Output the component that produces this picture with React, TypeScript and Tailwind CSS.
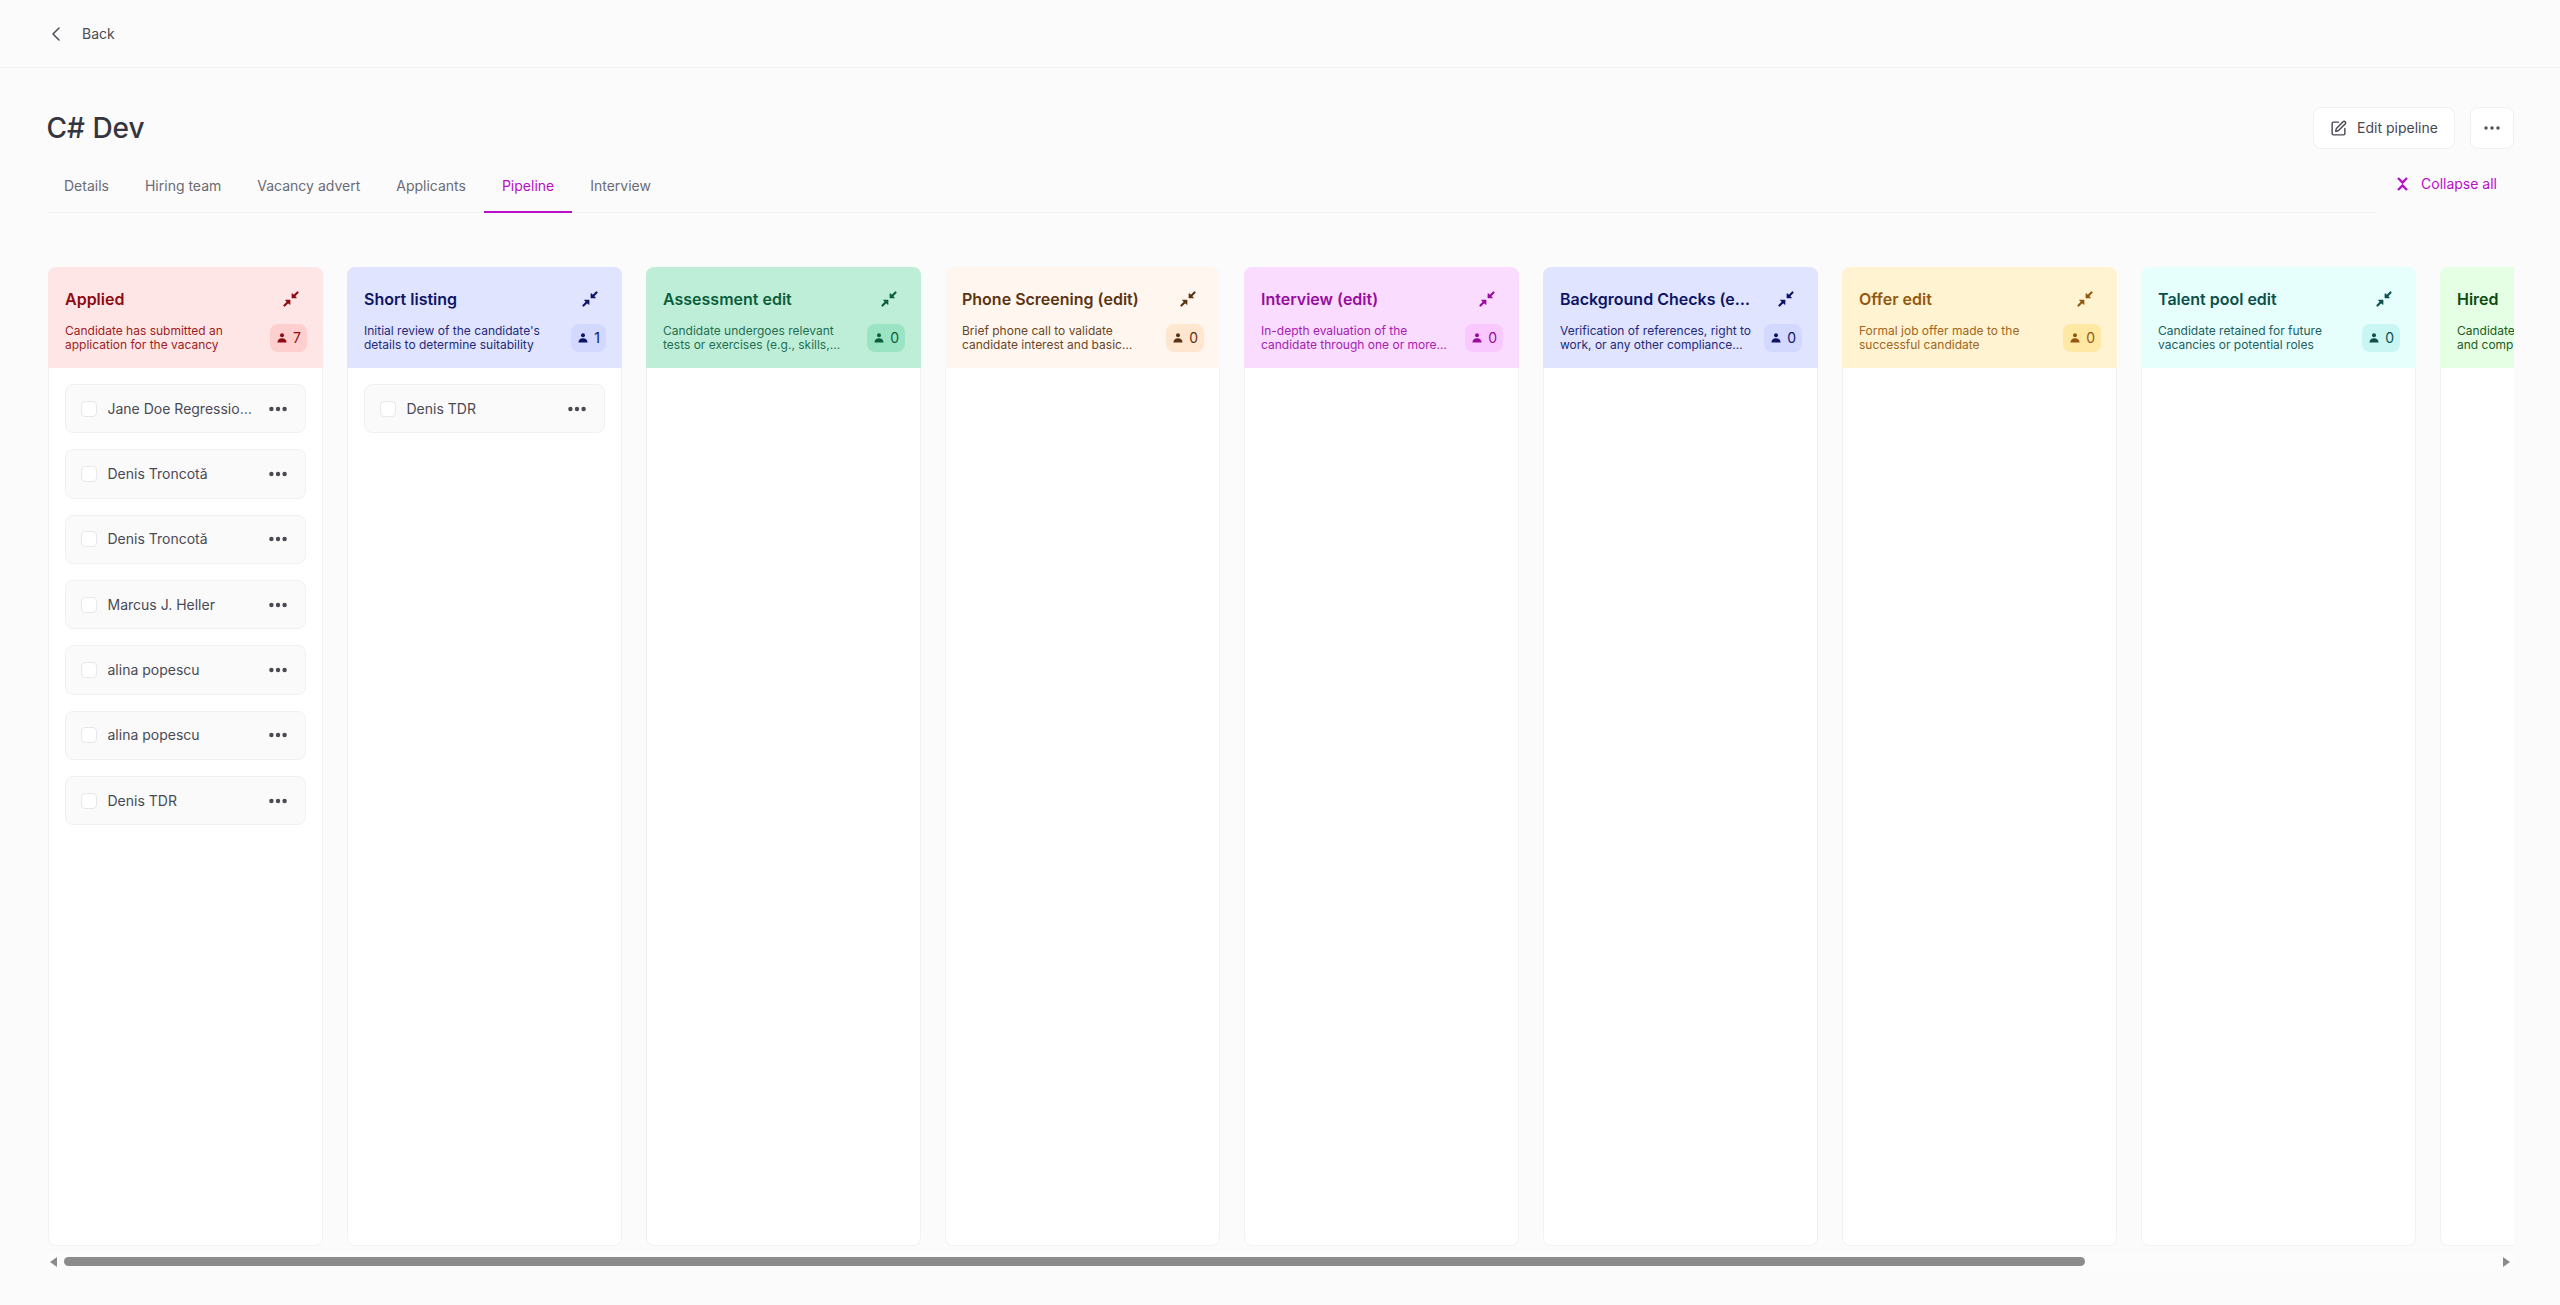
import { ChevronLeft, SquarePen } from "lucide-react";

type Stage = {
  title: string;
  desc: string;
  count: number;
  bg: string;
  titleColor: string;
  descColor: string;
  badgeBg: string;
  iconColor: string;
  cards: string[];
};

const stages: Stage[] = [
  {
    title: "Applied",
    desc: "Candidate has submitted an application for the vacancy",
    count: 7,
    bg: "bg-[#ffe6e6]",
    titleColor: "text-[#8f0a12]",
    descColor: "text-[#a01c24]",
    badgeBg: "bg-[#ffcfcf]",
    iconColor: "text-[#8f0a12]",
    cards: ["Jane Doe Regression Test", "Denis Troncotă", "Denis Troncotă", "Marcus J. Heller", "alina popescu", "alina popescu", "Denis TDR"],
  },
  {
    title: "Short listing",
    desc: "Initial review of the candidate's details to determine suitability",
    count: 1,
    bg: "bg-[#e0e4ff]",
    titleColor: "text-[#0d1466]",
    descColor: "text-[#242a78]",
    badgeBg: "bg-[#d2d8ff]",
    iconColor: "text-[#0d1466]",
    cards: ["Denis TDR"],
  },
  {
    title: "Assessment edit",
    desc: "Candidate undergoes relevant tests or exercises (e.g., skills, technical or personality)",
    count: 0,
    bg: "bg-[#bfeed8]",
    titleColor: "text-[#0b5e3c]",
    descColor: "text-[#1f6f50]",
    badgeBg: "bg-[#9be4c3]",
    iconColor: "text-[#0b5e3c]",
    cards: [],
  },
  {
    title: "Phone Screening (edit)",
    desc: "Brief phone call to validate candidate interest and basic qualifications for the role",
    count: 0,
    bg: "bg-[#fff7ef]",
    titleColor: "text-[#5a3412]",
    descColor: "text-[#6a4526]",
    badgeBg: "bg-[#ffe6d1]",
    iconColor: "text-[#5a3412]",
    cards: [],
  },
  {
    title: "Interview (edit)",
    desc: "In-depth evaluation of the candidate through one or more interviews with the team",
    count: 0,
    bg: "bg-[#f9dcff]",
    titleColor: "text-[#960c9f]",
    descColor: "text-[#a720b0]",
    badgeBg: "bg-[#f8c8ff]",
    iconColor: "text-[#960c9f]",
    cards: [],
  },
  {
    title: "Background Checks (edit)",
    desc: "Verification of references, right to work, or any other compliance requirements needed",
    count: 0,
    bg: "bg-[#e0e4ff]",
    titleColor: "text-[#0d1466]",
    descColor: "text-[#242a78]",
    badgeBg: "bg-[#d2d8ff]",
    iconColor: "text-[#0d1466]",
    cards: [],
  },
  {
    title: "Offer edit",
    desc: "Formal job offer made to the successful candidate",
    count: 0,
    bg: "bg-[#fff3d1]",
    titleColor: "text-[#92580f]",
    descColor: "text-[#a1661c]",
    badgeBg: "bg-[#ffe8a3]",
    iconColor: "text-[#92580f]",
    cards: [],
  },
  {
    title: "Talent pool edit",
    desc: "Candidate retained for future vacancies or potential roles",
    count: 0,
    bg: "bg-[#e6fffd]",
    titleColor: "text-[#0e4f4b]",
    descColor: "text-[#22605c]",
    badgeBg: "bg-[#c9f6f3]",
    iconColor: "text-[#0e4f4b]",
    cards: [],
  },
  {
    title: "Hired",
    desc: "Candidate has accepted the offer and completed onboarding",
    count: 0,
    bg: "bg-[#e5ffe5]",
    titleColor: "text-[#0e4a12]",
    descColor: "text-[#1d5a21]",
    badgeBg: "bg-[#c9f6c9]",
    iconColor: "text-[#0e4a12]",
    cards: [],
  },
];

const tabs = ["Details", "Hiring team", "Vacancy advert", "Applicants", "Pipeline", "Interview"];

function Dots({ big }: { big?: boolean }) {
  return big ? (
    <svg width="18" height="6" viewBox="0 0 18 6" fill="currentColor">
      <circle cx="2.4" cy="3" r="2.2" />
      <circle cx="9" cy="3" r="2.2" />
      <circle cx="15.6" cy="3" r="2.2" />
    </svg>
  ) : (
    <svg width="16" height="4" viewBox="0 0 16 4" fill="currentColor">
      <circle cx="2" cy="2" r="1.7" />
      <circle cx="8" cy="2" r="1.7" />
      <circle cx="14" cy="2" r="1.7" />
    </svg>
  );
}

function Person() {
  return (
    <svg width="12" height="12" viewBox="0 0 12 12" fill="currentColor">
      <circle cx="6" cy="3.2" r="2" />
      <path d="M1.4 10.6 C1.6 7.6 3.4 6.2 6 6.2 C8.6 6.2 10.4 7.6 10.6 10.6 Z" />
    </svg>
  );
}

function CollapseColumnIcon() {
  return (
    <svg width="16" height="16" viewBox="0 0 15 15" fill="currentColor" stroke="currentColor" strokeLinejoin="round" strokeLinecap="round">
      <path d="M8.6 2.6 L8.6 6.4 L12.4 6.4 Z" strokeWidth="1" />
      <path d="M9.4 5.6 L13.6 1.4" strokeWidth="2" fill="none" />
      <path d="M2.6 8.6 L6.4 8.6 L6.4 12.4 Z" strokeWidth="1" />
      <path d="M5.6 9.4 L1.4 13.6" strokeWidth="2" fill="none" />
    </svg>
  );
}

function CollapseAllIcon() {
  return (
    <svg width="11" height="14" viewBox="0 0 11 14" fill="none" stroke="currentColor" strokeWidth="2.4">
      <path d="M1 1 L5.5 5.6 L10 1" />
      <path d="M1 13 L5.5 8.4 L10 13" />
    </svg>
  );
}

function Column({ stage }: { stage: Stage }) {
  return (
    <section className="flex h-full w-[275px] shrink-0 flex-col">
      <header className={`flex h-[101px] shrink-0 flex-col rounded-t-lg pt-[16px] pr-4 pl-[17px] ${stage.bg}`}>
        <div className="flex h-8 items-center justify-between">
          <h3 className={`max-w-[196px] min-w-0 truncate text-base leading-6 font-semibold ${stage.titleColor}`}>{stage.title}</h3>
          <button className={`flex h-8 w-8 shrink-0 items-center justify-center ${stage.iconColor}`}>
            <CollapseColumnIcon />
          </button>
        </div>
        <div className="mt-[9px] flex items-center justify-between gap-3">
          <p className={`line-clamp-2 min-w-0 flex-1 text-xs leading-[14px] ${stage.descColor}`}>{stage.desc}</p>
          <span className={`flex h-7 shrink-0 items-center gap-[5px] rounded-lg px-[6px] text-sm ${stage.badgeBg} ${stage.titleColor}`}>
            <Person />
            {stage.count}
          </span>
        </div>
      </header>
      <div className="flex flex-1 flex-col gap-4 rounded-b-lg border-x border-b border-[#f2f2f3] bg-white px-4 pt-4">
        {stage.cards.map((name, i) => (
          <div key={i} className="flex h-[49.33px] shrink-0 items-center rounded-lg border border-[#f1f1f2] bg-[#fafafa] pr-[18px] pl-[15px]">
            <span className="h-4 w-4 shrink-0 rounded border border-[#e8e8ea] bg-white" />
            <span className="ml-[10.5px] min-w-0 flex-1 truncate pr-3 text-sm text-[#4a4a55]">{name}</span>
            <span className="shrink-0 text-[#4a4a55]">
              <Dots big />
            </span>
          </div>
        ))}
      </div>
    </section>
  );
}

export default function App() {
  return (
    <div className="flex h-screen flex-col overflow-hidden bg-[#fbfbfb] font-['Inter',sans-serif]">
      <div className="flex h-[68px] shrink-0 items-center gap-[14px] border-b border-[#f2f2f3] pl-[44px] text-[#4b4b55]">
        <ChevronLeft size={24} strokeWidth={1.5} />
        <span className="text-sm">Back</span>
      </div>

      <div className="mt-[39px] flex h-[42px] shrink-0 items-center justify-between pr-[46px] pl-[46.5px]">
        <h1 className="text-[28px] leading-9 font-medium text-[#35353f]">C# Dev</h1>
        <div className="flex items-center gap-[15px]">
          <button className="flex h-[42px] w-[142px] items-center justify-center gap-[10px] rounded-lg border border-[#eef0f4] bg-white text-sm font-normal text-[#484854]">
            <SquarePen size={17} strokeWidth={2} />
            Edit pipeline
          </button>
          <button className="flex h-[42px] w-11 items-center justify-center rounded-lg border border-[#eef0f4] bg-white text-[#50505c]">
            <Dots />
          </button>
        </div>
      </div>

      <div className="mt-3 flex shrink-0 items-start gap-[5px] pr-[46px] pl-12">
        <nav className="flex h-[52px] flex-1 border-b border-[#f3f3f4]">
          {tabs.map((t) => (
            <a
              key={t}
              className={`-mb-px flex h-[52px] items-center border-b-2 px-[18px] pb-px text-sm first:-ml-0.5 ${
                t === "Pipeline" ? "border-[#b90fc9] text-[#b90fc9]" : "border-transparent text-[#6b6b76]"
              }`}
            >
              {t}
            </a>
          ))}
        </nav>
        <button className="flex h-[46px] items-center gap-[13px] pr-[17px] pl-4 text-sm font-normal whitespace-nowrap text-[#b90fc9]">
          <CollapseAllIcon />
          Collapse all
        </button>
      </div>

      <div className="mt-[54px] mr-[46px] ml-12 flex min-h-0 flex-1 flex-col">
        <div className="min-h-0 flex-1 overflow-hidden">
          <div className="flex h-full w-max gap-6">
            {stages.map((s) => (
              <Column key={s.title} stage={s} />
            ))}
          </div>
        </div>
        <div className="mt-[7px] flex h-[17px] shrink-0 items-center bg-[#fcfcfc] pr-1 pl-0.5">
          <svg width="7" height="10" viewBox="0 0 7 10" fill="#8c8c8c">
            <path d="M7 0 V10 L0 5 Z" />
          </svg>
          <div className="ml-[7px] h-[9px] w-[2021px] rounded-[4.5px] bg-[#8c8c8c]" />
          <div className="flex-1" />
          <svg width="7" height="10" viewBox="0 0 7 10" fill="#8c8c8c">
            <path d="M0 0 V10 L7 5 Z" />
          </svg>
        </div>
      </div>
      <div className="h-[35px] shrink-0" />
    </div>
  );
}
